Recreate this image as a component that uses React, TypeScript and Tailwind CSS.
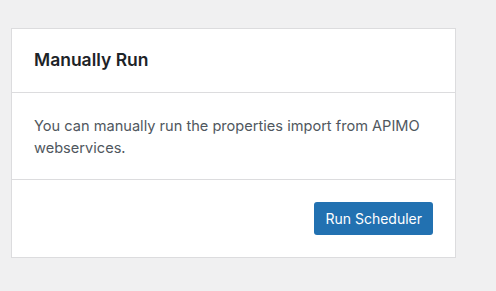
export default function App() {
  return (
    <div className="min-h-[291px] w-full bg-[#f0f0f1] pt-[28px] pl-[11px] font-['Inter',sans-serif]">
      <div className="w-[445px] border border-[#dcdcde] bg-white">
        {/* header */}
        <div className="flex h-[64px] items-center border-b border-[#dcdcde] px-[22px]">
          <h2 className="text-[17.5px] font-semibold text-[#1d2327]">Manually Run</h2>
        </div>

        {/* body */}
        <div className="border-b border-[#dcdcde] px-[22px] pt-[22px] pb-[20px]">
          <p className="text-[14.6px] leading-[22px] text-[#50575e]">
            You can manually run the properties import from APIMO webservices.
          </p>
        </div>

        {/* footer */}
        <div className="flex justify-end px-[22px] py-[22px]">
          <button className="h-[33px] rounded-[3px] bg-[#2271b1] px-[11px] text-[14px] text-white">
            Run Scheduler
          </button>
        </div>
      </div>
    </div>
  );
}
